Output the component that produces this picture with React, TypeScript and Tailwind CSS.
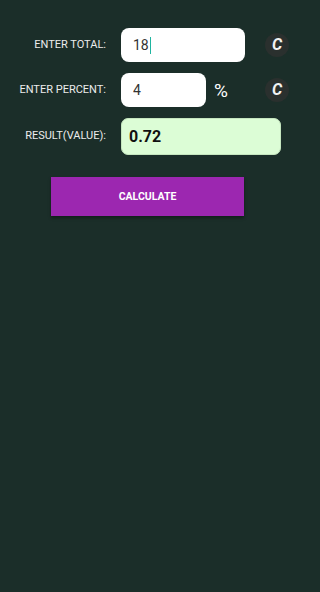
import { useState } from "react";

const font = { fontFamily: "Roboto, 'Liberation Sans', sans-serif" };

function ClearButton({ onClick }: { onClick: () => void }) {
  return (
    <button
      onClick={onClick}
      className="w-[24px] h-[24px] rounded-full bg-[#2a302e] flex items-center justify-center text-[#f2f2f2] text-[16px] font-bold italic leading-none"
    >
      C
    </button>
  );
}

export default function App() {
  const [total, setTotal] = useState("18");
  const [percent, setPercent] = useState("4");
  const [result, setResult] = useState("0.72");

  const calculate = () => {
    const t = parseFloat(total);
    const p = parseFloat(percent);
    if (isNaN(t) || isNaN(p)) return setResult("");
    setResult(String(Math.round(t * p) / 100));
  };

  return (
    <div className="w-full min-h-screen bg-[#1b2e29] pt-[28px]" style={font}>
      {/* total */}
      <div className="flex items-center h-[34px]">
        <div className="w-[106px] text-right text-[11px] text-[#ececec]">ENTER TOTAL:</div>
        <label className="ml-[15px] w-[124px] h-[34px] rounded-[8px] bg-white flex items-center pl-[12px] relative">
          <span className="text-[14px] text-[#333]">{total}</span>
          <span className="w-[1.5px] h-[17px] bg-[#1fb5a0] ml-[1px]" />
          <input
            value={total}
            onChange={(e) => setTotal(e.target.value)}
            className="absolute inset-0 opacity-0"
          />
        </label>
        <div className="ml-[20px]">
          <ClearButton onClick={() => setTotal("")} />
        </div>
      </div>

      {/* percent */}
      <div className="flex items-center h-[34px] mt-[11px]">
        <div className="w-[106px] text-right text-[11px] text-[#ececec]">ENTER PERCENT:</div>
        <div className="ml-[15px] w-[85px] h-[34px] rounded-[8px] bg-white flex items-center pl-[12px]">
          <input
            value={percent}
            onChange={(e) => setPercent(e.target.value)}
            className="w-full bg-transparent outline-none text-[14px] text-[#333]"
          />
        </div>
        <div className="w-[59px] pl-[8px] text-[19px] text-white leading-none">%</div>
        <ClearButton onClick={() => setPercent("")} />
      </div>

      {/* result */}
      <div className="flex items-center h-[37px] mt-[11px]">
        <div className="w-[106px] text-right text-[11px] text-[#ececec]">RESULT(VALUE):</div>
        <div className="ml-[15px] w-[160px] h-[37px] rounded-[7px] bg-[#dcfdd6] border border-[#c5e6bf] flex items-center pl-[7px] text-[16px] font-bold text-[#111]">
          {result}
        </div>
      </div>

      <button
        onClick={calculate}
        className="mt-[22px] ml-[51px] w-[193px] h-[39px] bg-[#9c27b0] text-white text-[10.5px] font-bold shadow-[0_2px_3px_rgba(0,0,0,0.35)]"
      >
        CALCULATE
      </button>
    </div>
  );
}
